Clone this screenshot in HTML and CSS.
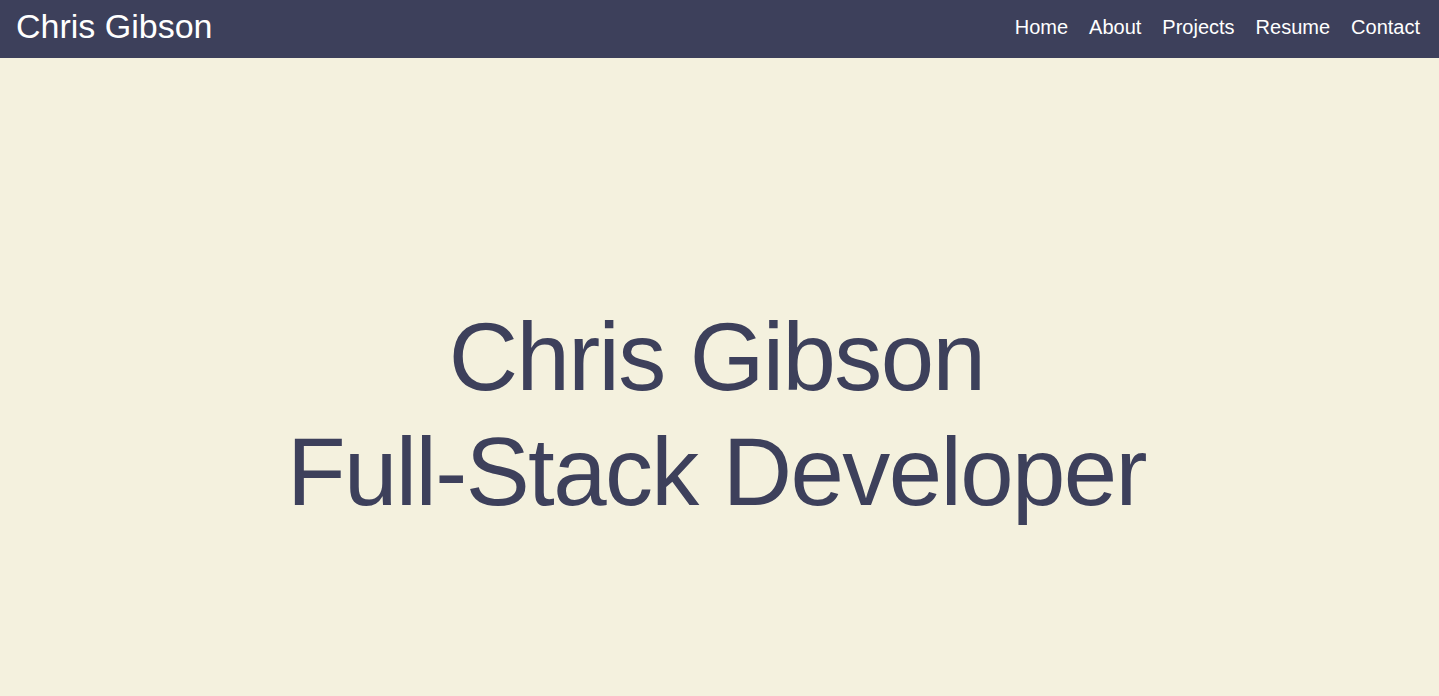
FILE: index.html
```html
<!DOCTYPE html>
<html lang="en">
<head>
<meta charset="utf-8">
<title>Chris Gibson</title>
<link rel="stylesheet" href="styles.css">
</head>
<body>
<header class="navbar">
  <a class="brand" href="#">Chris Gibson</a>
  <nav class="nav-links">
    <a href="#">Home</a>
    <a href="#">About</a>
    <a href="#">Projects</a>
    <a href="#">Resume</a>
    <a href="#">Contact</a>
  </nav>
</header>
<main class="hero">
  <h1 class="hero-title">Chris Gibson<br>Full-Stack Developer</h1>
</main>
</body>
</html>
```
FILE: styles.css
```css
* { box-sizing: border-box; }
html, body {
  margin: 0;
  padding: 0;
  height: 100%;
}
body {
  background: #f4f1de;
  font-family: "Liberation Sans", Arial, Helvetica, sans-serif;
  overflow: hidden;
}
.navbar {
  height: 58px;
  background: #3d405b;
  display: flex;
  align-items: center;
  justify-content: space-between;
  padding: 0 19px 5px 16px;
}
.brand {
  color: #ffffff;
  text-decoration: none;
  font-size: 34px;
  line-height: 1;
  padding-bottom: 2px;
}
.nav-links {
  display: flex;
  gap: 21px;
}
.nav-links a {
  color: #ffffff;
  text-decoration: none;
  font-size: 20px;
  line-height: 1;
}
.hero {
  display: flex;
  justify-content: center;
  padding: 241px 6px 0 0;
}
.hero-title {
  margin: 0;
  text-align: center;
  color: #3d405b;
  font-weight: 400;
  font-size: 96px;
  line-height: 115px;
  letter-spacing: -1.6px;
}
```
